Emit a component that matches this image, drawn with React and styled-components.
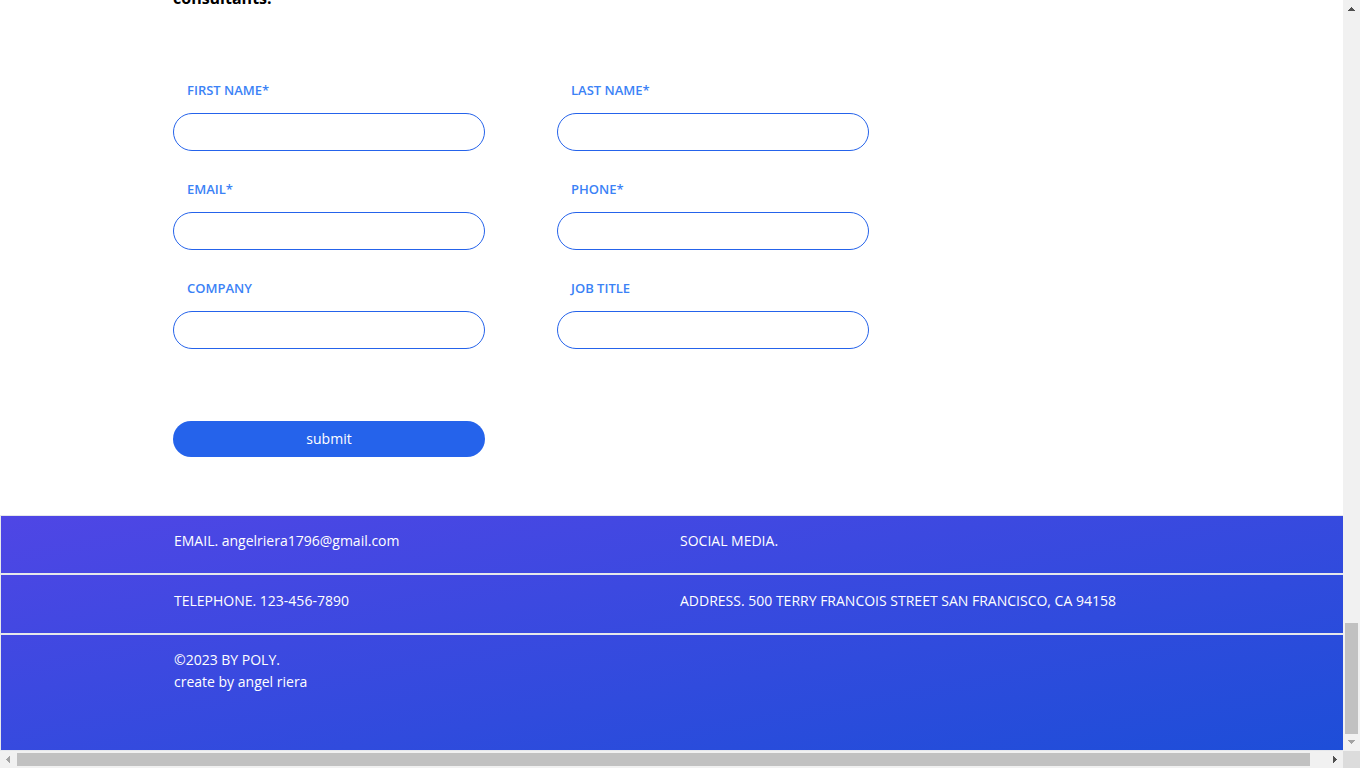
import React from "react";
import styled, { createGlobalStyle } from "styled-components";

const GlobalStyle = createGlobalStyle`
  *, *::before, *::after { box-sizing: border-box; }
  body {
    margin: 0;
    background: #fff;
    color: #000;
    font-family: "Segoe UI", "Open Sans", "Noto Sans", sans-serif;
    font-size: 14px;
    line-height: 22px;
  }
`;

const Window = styled.div`
  display: grid;
  grid-template-columns: minmax(0, 1fr) 17px;
  grid-template-rows: minmax(0, 1fr) 17px;
  height: 100vh;
`;

const Page = styled.div`
  display: flex;
  flex-direction: column;
  justify-content: flex-end;
  overflow: hidden;
`;

const Contact = styled.main`
  padding: 0 173px 58px;
`;

const Heading = styled.h2`
  margin: 0 0 70px;
  font-size: 16px;
  font-weight: 700;
  line-height: 24px;
`;

const Form = styled.form`
  display: flex;
  flex-direction: column;
  gap: 72px;
  max-width: 696px;
`;

const Fields = styled.div`
  display: grid;
  grid-template-columns: 1fr 1fr;
  gap: 28px 72px;
`;

const Field = styled.div`
  display: flex;
  flex-direction: column;
  gap: 13px;
`;

const Label = styled.label`
  padding-left: 14px;
  color: #3b82f6;
  font-size: 13px;
  font-weight: 600;
  line-height: 20px;
`;

const Input = styled.input`
  width: 100%;
  height: 38px;
  padding: 0 14px;
  border: 1px solid #2563eb;
  border-radius: 19px;
  background: #fff;
  font: inherit;
`;

const Submit = styled.button`
  width: calc(50% - 36px);
  height: 36px;
  padding: 0;
  border: 0;
  border-radius: 18px;
  background: #2563eb;
  color: #fff;
  font: inherit;
  cursor: pointer;
`;

const Footer = styled.footer`
  width: 100vw;
  background: linear-gradient(to bottom right, #4f46e5, #1d4ed8);
  color: #fff;
`;

const FooterRow = styled.section`
  display: grid;
  grid-template-columns: 1fr 1fr;
  padding: ${(p) => p.$top}px 0 ${(p) => p.$bottom}px;
  border: 1px solid #e5e7eb;
`;

const FooterText = styled.p`
  margin: 0;
  padding-left: ${(p) => (p.$inset ? 173 : 0)}px;
`;

const Track = styled.div`
  display: flex;
  flex-direction: ${(p) => (p.$vertical ? "column" : "row")};
  background: #f1f1f1;
`;

const Arrow = styled.svg`
  flex: none;
  display: block;
  width: 17px;
  height: 17px;
  fill: ${(p) => (p.$disabled ? "#a3a3a3" : "#505050")};
`;

const Space = styled.div`
  flex: ${(p) => p.$size} 0 0;
`;

const Thumb = styled(Space)`
  margin: ${(p) => (p.$vertical ? "0 2px" : "2px 0")};
  background: #c1c1c1;
`;

const Corner = styled.div`
  background: #dcdcdc;
`;

const fields = [
  { id: "first-name", label: "FIRST NAME*", type: "text" },
  { id: "last-name", label: "LAST NAME*", type: "text" },
  { id: "email", label: "EMAIL*", type: "email" },
  { id: "phone", label: "PHONE*", type: "tel" },
  { id: "company", label: "COMPANY", type: "text" },
  { id: "job-title", label: "JOB TITLE", type: "text" },
];

export default function App() {
  return (
    <>
      <GlobalStyle />
      <Window>
        <Page>
          <Contact>
            <Heading>consultants.</Heading>
            <Form onSubmit={(e) => e.preventDefault()}>
              <Fields>
                {fields.map((f) => (
                  <Field key={f.id}>
                    <Label htmlFor={f.id}>{f.label}</Label>
                    <Input id={f.id} name={f.id} type={f.type} />
                  </Field>
                ))}
              </Fields>
              <Submit type="submit">submit</Submit>
            </Form>
          </Contact>
          <Footer>
            <FooterRow $top={14} $bottom={21}>
              <FooterText $inset>EMAIL. angelriera1796@gmail.com</FooterText>
              <FooterText>SOCIAL MEDIA.</FooterText>
            </FooterRow>
            <FooterRow $top={15} $bottom={21}>
              <FooterText $inset>TELEPHONE. 123-456-7890</FooterText>
              <FooterText>ADDRESS. 500 TERRY FRANCOIS STREET SAN FRANCISCO, CA 94158</FooterText>
            </FooterRow>
            <FooterRow $top={14} $bottom={57}>
              <FooterText $inset>
                ©2023 BY POLY.
                <br />
                create by angel riera
              </FooterText>
            </FooterRow>
          </Footer>
        </Page>
        <Track $vertical aria-hidden="true">
          <Arrow viewBox="0 0 17 17" shapeRendering="crispEdges">
            <path d="M8 7h1v1h1v1h1v1h1v1H5v-1h1V9h1V8h1z" />
          </Arrow>
          <Space $size={606} />
          <Thumb $vertical $size={111} />
          <Arrow $disabled viewBox="0 0 17 17" shapeRendering="crispEdges">
            <path d="M5 6h7v1h-1v1h-1v1H9v1H8V9H7V8H6V7H5z" />
          </Arrow>
        </Track>
        <Track aria-hidden="true">
          <Arrow $disabled viewBox="0 0 17 17" shapeRendering="crispEdges">
            <path d="M6 8h1V7h1V6h1V5h1v7H9v-1H8v-1H7V9H6z" />
          </Arrow>
          <Thumb $size={1293} />
          <Space $size={16} />
          <Arrow viewBox="0 0 17 17" shapeRendering="crispEdges">
            <path d="M7 5h1v1h1v1h1v1h1v1h-1v1H9v1H8v1H7z" />
          </Arrow>
        </Track>
        <Corner />
      </Window>
    </>
  );
}
